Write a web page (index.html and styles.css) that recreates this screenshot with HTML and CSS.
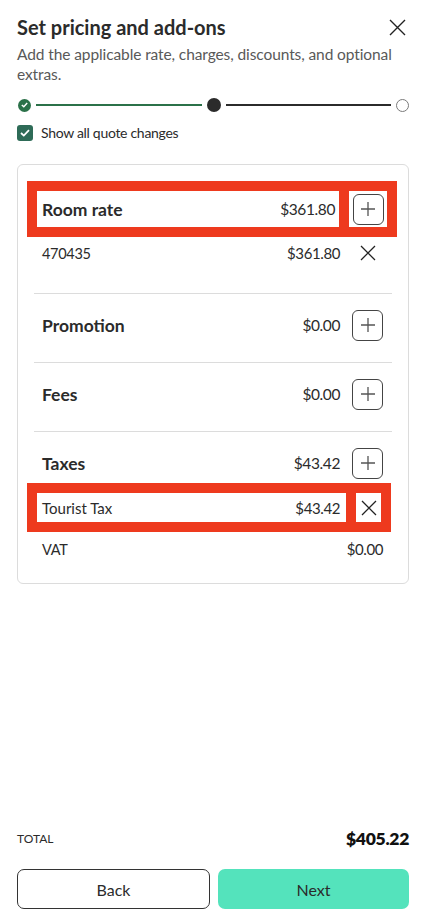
FILE: index.html
```html
<!DOCTYPE html>
<html lang="en">
<head>
  <meta charset="UTF-8" />
  <meta name="viewport" content="width=device-width, initial-scale=1" />
  <title>Set pricing and add-ons</title>
  <link rel="stylesheet" href="styles.css">
</head>
<body>
  <div class="page">
    <header class="top">
      <h1 class="title">Set pricing and add-ons</h1>
      <button class="close" aria-label="Close">
        <svg width="17" height="17" viewBox="0 0 17 17"><path d="M1 1L16 16M16 1L1 16" stroke="#222" stroke-width="1.4" fill="none"/></svg>
      </button>
    </header>
    <p class="subtitle">Add the applicable rate, charges, discounts, and optional extras.</p>

    <!-- stepper -->
    <div class="stepper">
      <span class="step done">
        <svg width="7" height="6" viewBox="0 0 7 6"><path d="M0.8 3L2.8 4.8L6.2 1" stroke="#fff" stroke-width="1.4" fill="none"/></svg>
      </span>
      <span class="bar green"></span>
      <span class="step current"></span>
      <span class="bar dark"></span>
      <span class="step todo"></span>
    </div>

    <label class="check">
      <span class="box">
        <svg width="10" height="8" viewBox="0 0 10 8"><path d="M1 4L3.8 6.6L9 1.2" stroke="#fff" stroke-width="1.8" fill="none"/></svg>
      </span>
      Show all quote changes
    </label>

    <div class="card">
      <!-- Room rate -->
      <section class="group first">
        <div class="hl hl-head">
          <div class="cell main">
            <span class="name">Room rate</span>
            <span class="amount">$361.80</span>
          </div>
          <div class="cell act">
            <button class="plus" aria-label="Add">
              <svg width="16" height="16" viewBox="0 0 16 16"><path d="M8 1V15M1 8H15" stroke="#555" stroke-width="1.3"/></svg>
            </button>
          </div>
        </div>
        <div class="line">
          <span class="name">470435</span>
          <span class="amount">$361.80</span>
          <span class="icon-x">
            <svg width="16" height="16" viewBox="0 0 16 16"><path d="M1 1L15 15M15 1L1 15" stroke="#222" stroke-width="1.3" fill="none"/></svg>
          </span>
        </div>
      </section>

      <section class="group">
        <div class="head">
          <span class="name">Promotion</span>
          <span class="amount">$0.00</span>
          <button class="plus" aria-label="Add">
            <svg width="16" height="16" viewBox="0 0 16 16"><path d="M8 1V15M1 8H15" stroke="#555" stroke-width="1.3"/></svg>
          </button>
        </div>
      </section>

      <section class="group">
        <div class="head">
          <span class="name">Fees</span>
          <span class="amount">$0.00</span>
          <button class="plus" aria-label="Add">
            <svg width="16" height="16" viewBox="0 0 16 16"><path d="M8 1V15M1 8H15" stroke="#555" stroke-width="1.3"/></svg>
          </button>
        </div>
      </section>

      <section class="group last">
        <div class="head">
          <span class="name">Taxes</span>
          <span class="amount">$43.42</span>
          <button class="plus" aria-label="Add">
            <svg width="16" height="16" viewBox="0 0 16 16"><path d="M8 1V15M1 8H15" stroke="#555" stroke-width="1.3"/></svg>
          </button>
        </div>
        <div class="hl hl-line">
          <div class="cell main">
            <span class="name">Tourist Tax</span>
            <span class="amount">$43.42</span>
          </div>
          <div class="cell act">
            <svg width="16" height="16" viewBox="0 0 16 16"><path d="M1 1L15 15M15 1L1 15" stroke="#222" stroke-width="1.3" fill="none"/></svg>
          </div>
        </div>
        <div class="line vat">
          <span class="name">VAT</span>
          <span class="amount">$0.00</span>
        </div>
      </section>
    </div>

    <footer class="foot">
      <div class="total">
        <span class="total-label">TOTAL</span>
        <span class="total-value">$405.22</span>
      </div>
      <div class="actions">
        <button class="btn back">Back</button>
        <button class="btn next">Next</button>
      </div>
    </footer>
  </div>
</body>
</html>
```

FILE: styles.css
```css
* {
  box-sizing: border-box;
}
body {
  margin: 0;
  font-family: 'Lato', 'Noto Sans', sans-serif;
  color: #2b2b2b;
  background-color: #fff;
}
button {
  font-family: inherit;
}
.page {
  min-height: 100vh;
  display: flex;
  flex-direction: column;
  padding: 13px 18px 10px 17px;
}
.top {
  display: flex;
  justify-content: space-between;
  align-items: center;
  height: 28px;
}
h1.title {
  margin: 0;
  font-size: 20px;
  font-weight: 700;
  color: #2b2b2b;
}
.close {
  border: 0;
  background: none;
  padding: 0;
  margin-right: 3px;
  width: 17px;
  height: 17px;
}
p.subtitle {
  margin: 3px 0 0 0;
  font-size: 15.5px;
  letter-spacing: -0.1px;
  line-height: 20px;
  color: #595959;
}

/* stepper */
.stepper {
  display: flex;
  align-items: center;
  margin-top: 14px;
  height: 14px;
}
.step {
  width: 13px;
  height: 13px;
  border-radius: 50%;
  flex: none;
  display: flex;
  align-items: center;
  justify-content: center;
}
.step.done {
  background-color: #2b7149;
  margin-left: 1px;
}
.step.current {
  background-color: #2b2b2b;
  width: 14px;
  height: 14px;
}
.step.todo {
  border: 1.5px solid #7a7a7a;
}
.bar {
  flex: 1;
  height: 2px;
  margin: 0 5px;
}
.bar.green {
  background-color: #2b7149;
}
.bar.dark {
  background-color: #2b2b2b;
}

.check {
  display: flex;
  align-items: center;
  gap: 8px;
  margin-top: 12px;
  font-size: 14px;
  letter-spacing: -0.3px;
  color: #2b2b2b;
}
.box {
  width: 16px;
  height: 16px;
  border-radius: 3px;
  background-color: #2e6b57;
  display: flex;
  align-items: center;
  justify-content: center;
}

/* card */
.card {
  margin-top: 23px;
  border: 1px solid #dcdcdc;
  border-radius: 6px;
  padding: 16px 16px 17px 16px;
}
.group {
  border-top: 1px solid #dcdcdc;
  padding: 11px 0 17px 0;
}
.group.first {
  border-top: 0;
  padding: 0 0 24px 0;
}
.group.last {
  padding-bottom: 0;
}
.head, .line {
  display: flex;
  align-items: center;
  padding: 0 9px 0 8px;
}
.head {
  height: 40px;
}
.name {
  flex: 1;
}
.head .name, .hl-head .name {
  font-size: 17.5px;
  font-weight: 700;
}
.amount {
  font-size: 15.5px;
  letter-spacing: -0.4px;
}
.head .amount {
  margin-right: 12px;
}
.plus {
  width: 31px;
  height: 31px;
  border: 1px solid #444;
  border-radius: 6px;
  background: #fff;
  padding: 0;
  display: flex;
  align-items: center;
  justify-content: center;
}
.line {
  height: 32px;
  font-size: 14.5px;
  letter-spacing: -0.3px;
  padding-right: 8px;
}
.line .amount {
  font-size: 15px;
}
.icon-x {
  width: 32px;
  margin-left: 12px;
  display: flex;
  justify-content: center;
}
.line.vat {
  height: 34px;
  padding-right: 9px;
}

/* highlighted rows */
.hl {
  display: flex;
  gap: 10px;
  padding: 10px;
  background-color: #ee3a1e;
}
.hl .cell {
  background-color: #fff;
  display: flex;
  align-items: center;
}
.hl .main {
  flex: 1;
  padding: 0 4px 0 5px;
}
.hl .act {
  justify-content: center;
}
.hl-head {
  margin: 0 -5px 0 -7px;
}
.hl-head .cell {
  height: 36px;
}
.hl-head .act {
  width: 38px;
}
.hl-line {
  margin: 0 1px 0 -7px;
}
.hl-line .cell {
  height: 29px;
  font-size: 15px;
}
.hl-line .amount {
  font-size: 15px;
  margin-right: 2px;
}
.hl-line .act {
  width: 25px;
}

/* footer */
.foot {
  margin-top: auto;
}
.total {
  display: flex;
  justify-content: space-between;
  align-items: center;
  height: 24px;
}
.total-label {
  font-size: 12px;
}
.total-value {
  font-size: 17.5px;
  letter-spacing: -0.3px;
  font-weight: 800;
  color: #111;
}
.actions {
  display: flex;
  gap: 8px;
  margin-top: 19px;
}
.btn {
  flex: 1;
  height: 40px;
  border-radius: 7px;
  font-size: 16px;
  color: #2b2b2b;
}
.btn.back {
  background: #fff;
  border: 1px solid #333;
}
.btn.next {
  background-color: #54e3bc;
  border: 0;
}
```
